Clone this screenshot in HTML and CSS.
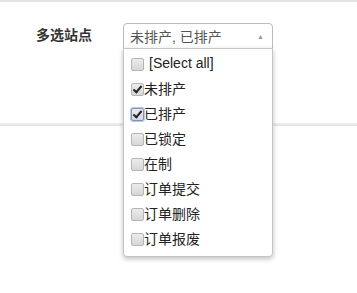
FILE: index.html
```html
<!DOCTYPE html>
<html lang="zh-CN">
<head>
    <meta charset="UTF-8">
    <title>多选站点</title>
    <link rel="stylesheet" href="styles.css">
</head>
<body>

<div class="page">
    <div class="form-row">
        <label class="field-label">多选站点</label>
        <div class="multi-select">
            <div class="select-box">
                <span class="select-text">未排产, 已排产</span>
                <span class="select-arrow">&#9650;</span>
            </div>
            <!-- Dropdown -->
            <ul class="select-menu">
                <li class="select-all"><input type="checkbox"><span>[Select all]</span></li>
                <li><input type="checkbox" checked><span>未排产</span></li>
                <li><input type="checkbox" checked class="focused"><span>已排产</span></li>
                <li><input type="checkbox"><span>已锁定</span></li>
                <li><input type="checkbox"><span>在制</span></li>
                <li><input type="checkbox"><span>订单提交</span></li>
                <li><input type="checkbox"><span>订单删除</span></li>
                <li><input type="checkbox"><span>订单报废</span></li>
            </ul>
        </div>
    </div>
    <div class="divider"></div>
</div>

</body>
</html>
```

FILE: styles.css
```css
* {
    box-sizing: border-box;
    margin: 0;
    padding: 0;
}

html, body {
    min-height: 293px;
}

body {
    font-family: "Liberation Sans", Arial, "Noto Sans CJK SC", sans-serif;
    font-size: 14px;
    color: #333;
    background-color: #fff;
}

.page {
    border-top: 2px solid #e3e3e3;
}

.form-row {
    display: flex;
    align-items: flex-start;
    padding: 21px 0 0 36px;
    height: 121px;
}

.field-label {
    width: 87px;
    font-weight: bold;
    line-height: 25px;
    color: #333;
}

.multi-select {
    position: relative;
    width: 150px;
}

.select-box {
    display: flex;
    align-items: center;
    justify-content: space-between;
    height: 26px;
    padding: 0 8px 0 6px;
    border: 1px solid #bbb;
    border-radius: 4px 4px 0 0;
    background-color: #fff;
}

.select-text {
    color: #555;
}

.select-arrow {
    font-size: 7px;
    color: #999;
}

.select-menu {
    position: absolute;
    top: 25px;
    left: 0;
    width: 150px;
    list-style: none;
    padding: 2px 0 6px 7px;
    background-color: #fff;
    border: 1px solid #c5c5c5;
    border-radius: 0 0 4px 4px;
    box-shadow: 0 2px 5px rgba(0, 0, 0, 0.25);
    z-index: 5;
}

.select-menu li {
    display: flex;
    align-items: center;
    height: 25px;
    color: #222;
}

.select-menu li.select-all {
    height: 24px;
}

/* Old-style grey checkbox */
.select-menu input {
    appearance: none;
    -webkit-appearance: none;
    position: relative;
    width: 13px;
    height: 13px;
    margin: 3px 0 0 0;
    border: 1px solid #b5b5b5;
    border-radius: 2px;
    background: linear-gradient(#ececec, #d6d6d6);
}

.select-menu input.focused {
    border-color: #7c93c0;
    box-shadow: 0 0 0 1px #b8c8e8;
}

.select-menu input:checked::after {
    content: "";
    position: absolute;
    left: 3px;
    top: 0;
    width: 3px;
    height: 7px;
    border: solid #222;
    border-width: 0 2px 2px 0;
    transform: rotate(40deg);
}

.select-all span {
    margin-left: 5px;
}

.divider {
    height: 3px;
    border-top: 1px solid #eee;
    border-bottom: 2px solid #e6e6e6;
}
```
